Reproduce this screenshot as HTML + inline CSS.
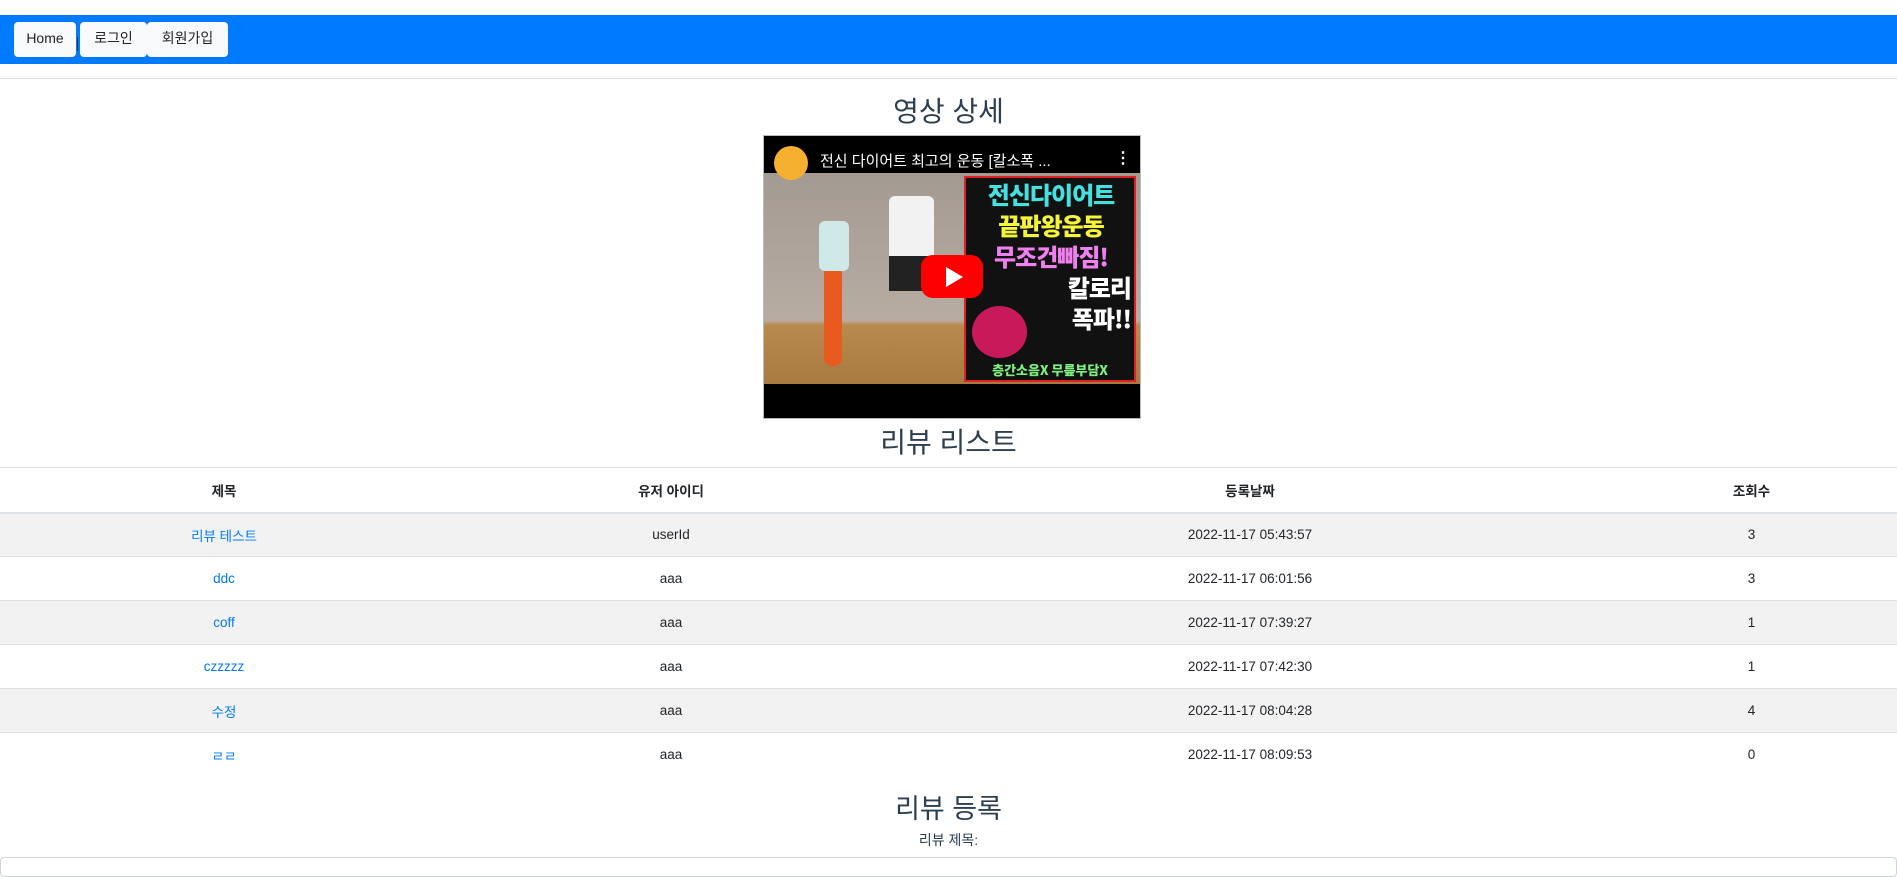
<!DOCTYPE html>
<html><head><meta charset="utf-8"><style>
*{box-sizing:border-box;margin:0;padding:0}
body{width:1897px;height:863px;overflow:hidden;background:#fff;font-family:"Liberation Sans","Noto Sans CJK KR",sans-serif;color:#2c3e50;position:relative}
.nav{position:absolute;top:15px;left:0;width:1897px;height:49px;background:#007bff}
.btn{position:absolute;top:7px;height:35px;background:#f8f9fa;border-radius:4px;font-size:14px;color:#212529;line-height:33px;text-align:center}
.sep{position:absolute;left:77px;top:22px;width:1px;height:14px;background:#333}
.hr{position:absolute;top:78px;left:0;width:1897px;height:1px;background:#ddd}
h2{position:absolute;left:0;width:1897px;text-align:center;font-weight:400;font-size:28px;color:#2c3e50}
.vid{position:absolute;left:763px;top:135px;width:378px;height:284px;border:1px solid #bbb;background:#000;overflow:hidden}
table{position:absolute;top:467px;left:0;width:1897px;border-collapse:collapse;font-size:13.5px;color:#212529}
td,th{height:44px;text-align:center;border-top:1px solid #dee2e6;vertical-align:middle}
th{font-weight:700;font-size:13.5px;border-bottom:2px solid #dee2e6;height:45px}
tr.s td{background:#f2f2f2}
a{color:#007bff;text-decoration:none}
</style></head><body>
<div class="nav">
<div class="btn" style="left:14px;width:62px">Home</div>
<div class="sep"></div>
<div class="btn" style="left:80px;width:67px">로그인</div>
<div class="btn" style="left:147px;width:81px">회원가입</div>
</div>
<div class="hr"></div>
<h2 style="top:90px">영상 상세</h2>
<div class="vid">
 <div style="position:absolute;left:0;top:37px;width:376px;height:211px;background:linear-gradient(#a39a92,#b8aca2 70%,#b88a4e 72%,#a87a40)"></div>
 <div style="position:absolute;left:60px;top:130px;width:18px;height:100px;background:#e85a20;border-radius:8px"></div>
 <div style="position:absolute;left:55px;top:85px;width:30px;height:50px;background:#cfe8e8;border-radius:6px"></div>
 <div style="position:absolute;left:125px;top:60px;width:45px;height:65px;background:#f2f2f2;border-radius:6px"></div>
 <div style="position:absolute;left:125px;top:120px;width:40px;height:35px;background:#222"></div>
 <div style="position:absolute;left:200px;top:40px;width:172px;height:206px;background:#111;border:2px solid #d22"></div>
 <div style="position:absolute;left:203px;top:42px;width:168px;font:900 24px/31px 'Noto Sans CJK KR',sans-serif;text-align:center;white-space:nowrap;letter-spacing:-1px">
  <div style="color:#45e0e0">전신다이어트</div><div style="color:#f5f53a">끝판왕운동</div><div style="color:#f07ff0">무조건빠짐!</div>
  <div style="color:#fff;text-align:right;padding-right:4px">칼로리</div><div style="color:#fff;text-align:right;padding-right:4px">폭파!!</div></div>
 <div style="position:absolute;left:208px;top:170px;width:55px;height:52px;border-radius:50%;background:#c81a5a"></div>
 <div style="position:absolute;left:202px;top:224px;width:168px;font:900 13px 'Noto Sans CJK KR',sans-serif;color:#7df07d;text-align:center;white-space:nowrap">층간소음X 무릎부담X</div>
 <div style="position:absolute;left:0;top:0;width:376px;height:37px;background:#000"></div>
 <div style="position:absolute;left:10px;top:10px;width:34px;height:34px;border-radius:50%;background:#f5b030"></div>
 <div style="position:absolute;left:56px;top:14px;color:#fff;font-size:15px;white-space:nowrap">전신 다이어트 최고의 운동 [칼소폭 ...</div>
 <div style="position:absolute;left:351px;top:12px;color:#fff;font-size:16px;font-weight:700">⋮</div>
 <div style="position:absolute;left:157px;top:119px;width:62px;height:43px;background:#f00;border-radius:12px"></div>
 <div style="position:absolute;left:182px;top:131px;width:0;height:0;border-left:17px solid #fff;border-top:10px solid transparent;border-bottom:10px solid transparent"></div>
</div>
<h2 style="top:421px">리뷰 리스트</h2>
<table>
<tr><th style="width:448px">제목</th><th style="width:446px">유저 아이디</th><th style="width:712px">등록날짜</th><th>조회수</th></tr>
<tr class="s"><td><a>리뷰 테스트</a></td><td>userId</td><td>2022-11-17 05:43:57</td><td>3</td></tr>
<tr><td><a>ddc</a></td><td>aaa</td><td>2022-11-17 06:01:56</td><td>3</td></tr>
<tr class="s"><td><a>coff</a></td><td>aaa</td><td>2022-11-17 07:39:27</td><td>1</td></tr>
<tr><td><a>czzzzz</a></td><td>aaa</td><td>2022-11-17 07:42:30</td><td>1</td></tr>
<tr class="s"><td><a>수정</a></td><td>aaa</td><td>2022-11-17 08:04:28</td><td>4</td></tr>
<tr><td style="border-bottom:none"><a>ㄹㄹ</a></td><td>aaa</td><td>2022-11-17 08:09:53</td><td>0</td></tr>
</table>
<h2 style="top:787px;font-size:27px">리뷰 등록</h2>
<div style="position:absolute;top:830px;left:0;width:1897px;text-align:center;font-size:14px;color:#2c3e50">리뷰 제목:</div>
<div style="position:absolute;top:857px;left:0;width:1897px;height:20px;border:1px solid #ced4da;border-radius:4px"></div>
</body></html>
